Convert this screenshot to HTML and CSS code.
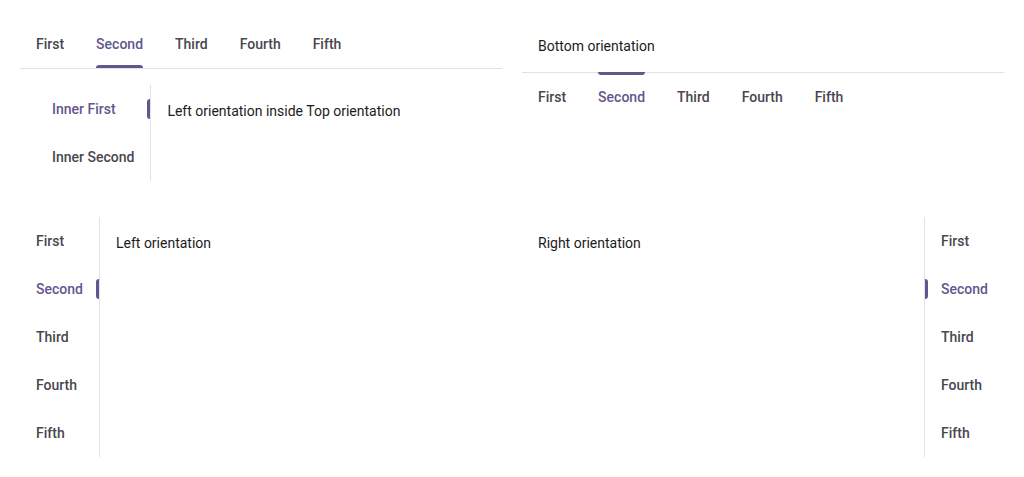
FILE: index.html
```html
<!DOCTYPE html>
<html lang="en">
<head>
<meta charset="utf-8">
<title>Tabs orientations</title>
<link rel="stylesheet" href="styles.css">
</head>
<body>
<div class="page">
  <!-- Top orientation -->
  <section class="tabs tabs-top">
    <div class="tablist tablist-top">
      <div class="tab">First</div>
      <div class="tab active">Second</div>
      <div class="tab">Third</div>
      <div class="tab">Fourth</div>
      <div class="tab">Fifth</div>
    </div>
    <div class="panel">
      <div class="tabs tabs-left">
        <div class="tablist tablist-left">
          <div class="tab active">Inner First</div>
          <div class="tab">Inner Second</div>
        </div>
        <div class="panel content">Left orientation inside Top orientation</div>
      </div>
    </div>
  </section>

  <!-- Bottom orientation -->
  <section class="tabs tabs-bottom">
    <div class="panel content">Bottom orientation</div>
    <div class="tablist tablist-bottom">
      <div class="tab">First</div>
      <div class="tab active">Second</div>
      <div class="tab">Third</div>
      <div class="tab">Fourth</div>
      <div class="tab">Fifth</div>
    </div>
  </section>

  <!-- Left orientation -->
  <section class="tabs tabs-left">
    <div class="tablist tablist-left tablist-wide">
      <div class="tab">First</div>
      <div class="tab active">Second</div>
      <div class="tab">Third</div>
      <div class="tab">Fourth</div>
      <div class="tab">Fifth</div>
    </div>
    <div class="panel content grow">Left orientation</div>
  </section>

  <!-- Right orientation -->
  <section class="tabs tabs-right">
    <div class="panel content grow">Right orientation</div>
    <div class="tablist tablist-right tablist-wide">
      <div class="tab">First</div>
      <div class="tab active">Second</div>
      <div class="tab">Third</div>
      <div class="tab">Fourth</div>
      <div class="tab">Fifth</div>
    </div>
  </section>
</div>
</body>
</html>
```

FILE: styles.css
```css
html, body {
  margin: 0;
  padding: 0;
  background: #ffffff;
}

body {
  font-family: Roboto, "Liberation Sans", Arial, sans-serif;
  color: #1d1b20;
}

.page {
  display: grid;
  grid-template-columns: 482px 482px;
  column-gap: 20px;
  row-gap: 20px;
  padding: 20px;
  align-items: start;
}

.tabs {
  display: flex;
}

.tabs-top,
.tabs-bottom {
  flex-direction: column;
}

.tablist {
  display: flex;
}

.tablist-top {
  flex-direction: row;
  border-bottom: 1px solid #e3e1e6;
}

.tablist-bottom {
  flex-direction: row;
  border-top: 1px solid #e3e1e6;
}

.tablist-left {
  flex-direction: column;
  border-right: 1px solid #e3e1e6;
}

.tablist-right {
  flex-direction: column;
  border-left: 1px solid #e3e1e6;
}

.tablist-wide {
  box-sizing: border-box;
  width: 80px;
}

.tab {
  position: relative;
  height: 48px;
  padding: 0 16px;
  display: flex;
  align-items: center;
  font-size: 14px;
  font-weight: 500;
  letter-spacing: 0;
  color: #4a4650;
  white-space: nowrap;
  cursor: pointer;
}

.tab.active {
  color: #65558f;
}

.tab.active::after {
  content: "";
  position: absolute;
  background: #65558f;
}

.tablist-top .tab.active::after {
  left: 16px;
  right: 16px;
  bottom: 0;
  height: 3px;
  border-radius: 3px 3px 0 0;
}

.tablist-bottom .tab.active::after {
  left: 16px;
  right: 16px;
  top: -1px;
  height: 3px;
  border-radius: 0 0 3px 3px;
}

.tablist-left .tab.active::after {
  right: 0;
  top: 14px;
  bottom: 14px;
  width: 3px;
  border-radius: 3px 0 0 3px;
}

.tablist-right .tab.active::after {
  left: 0;
  top: 14px;
  bottom: 14px;
  width: 3px;
  border-radius: 0 3px 3px 0;
}

.panel {
  padding: 16px;
}

.grow {
  flex: 1;
}

.content {
  font-size: 14px;
  font-weight: 400;
  line-height: 20px;
  letter-spacing: 0;
  color: #1d1b20;
}
```
